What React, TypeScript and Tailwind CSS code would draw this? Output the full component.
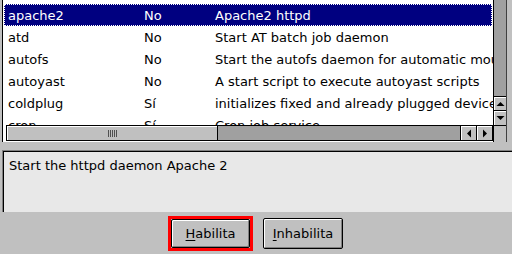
import React from "react";

const rows: [string, string, string][] = [
  ["apache2", "No", "Apache2 httpd"],
  ["atd", "No", "Start AT batch job daemon"],
  ["autofs", "No", "Start the autofs daemon for automatic mounting"],
  ["autoyast", "No", "A start script to execute autoyast scripts"],
  ["coldplug", "Sí", "initializes fixed and already plugged devices"],
  ["cron", "Sí", "Cron job service"],
];

function Tri({ dir }: { dir: "up" | "down" | "left" | "right" }) {
  const pts: Record<string, string> = {
    up: "0.5,5 4.5,1 8.5,5",
    down: "0.5,1 4.5,5 8.5,1",
    left: "5,0.5 1,4.5 5,8.5",
    right: "1,0.5 5,4.5 1,8.5",
  };
  const vert = dir === "up" || dir === "down";
  return (
    <svg width={vert ? 9 : 6} height={vert ? 6 : 9} viewBox={vert ? "0 0 9 6" : "0 0 6 9"}>
      <polygon points={pts[dir]} fill="#000" />
    </svg>
  );
}

export default function App() {
  return (
    <div
      className="w-[512px] h-[254px] bg-[#c0c0c0] flex flex-col overflow-hidden text-[13px] text-black leading-none"
      style={{ fontFamily: '"DejaVu Sans", sans-serif' }}
    >
      {/* list frame */}
      <div className="h-[142px] ml-[2px] w-[505px] shrink-0 flex border-l border-black border-r border-r-[#404040] bg-white">
        <div className="w-[490px] shrink-0 flex flex-col overflow-hidden">
          <div className="h-[125px] overflow-hidden pt-[4px] px-[1px]">
            {rows.map((r, i) => (
              <div
                key={r[0]}
                className={
                  "h-[22px] flex items-center border border-dotted pl-[3px] whitespace-nowrap " +
                  (i === 0 ? "bg-[#000080] text-white border-white" : "border-transparent")
                }
              >
                <div className="w-[136px] shrink-0">{r[0]}</div>
                <div className="w-[71px] shrink-0">{r[1]}</div>
                <div className="shrink-0">{r[2]}</div>
              </div>
            ))}
          </div>
          {/* horizontal scrollbar */}
          <div className="ml-[3px] w-[487px] h-[16px] shrink-0 flex bg-[#a0a0a0] border border-black">
            <div className="w-[211px] h-full bg-[#c0c0c0] border-r border-black shadow-[inset_1px_1px_0_#fff] flex items-center justify-center">
              <div className="flex gap-[1px] h-[7px]">
                <div className="w-[1px] bg-[#505050]" />
                <div className="w-[1px] bg-[#505050]" />
                <div className="w-[1px] bg-[#505050]" />
                <div className="w-[1px] bg-[#505050]" />
                <div className="w-[1px] bg-[#505050]" />
              </div>
            </div>
            <div className="flex-1" />
            <div className="w-[16px] h-full bg-[#c0c0c0] border-l border-black shadow-[inset_1px_1px_0_#fff] flex items-center justify-center">
              <Tri dir="left" />
            </div>
            <div className="w-[16px] h-full bg-[#c0c0c0] border-l border-black shadow-[inset_1px_1px_0_#fff] flex items-center justify-center">
              <Tri dir="right" />
            </div>
          </div>
          <div className="flex-1" />
        </div>
        {/* vertical scrollbar */}
        <div className="w-[13px] shrink-0 flex flex-col border-l border-black">
          <div className="h-[96px] bg-[#a0a0a0]" />
          <div className="h-[15px] bg-[#c0c0c0] border-y border-black shadow-[inset_1px_1px_0_#fff] flex items-center justify-center">
            <Tri dir="up" />
          </div>
          <div className="h-[15px] bg-[#c0c0c0] border-b border-black shadow-[inset_1px_1px_0_#fff] flex items-center justify-center">
            <Tri dir="down" />
          </div>
          <div className="flex-1 bg-[#c0c0c0]" />
        </div>
      </div>

      {/* description */}
      <div className="mt-[8px] ml-[2px] h-[62px] shrink-0 border-t border-l border-[#808080]">
        <div className="h-full border-t border-l border-black bg-[#e8e8e8] pl-[5px] pt-[7px]">
          Start the httpd daemon Apache 2
        </div>
      </div>

      {/* buttons */}
      <div className="flex items-start pt-[4px]">
        <div className="ml-[168px] w-[85px] h-[35px] border-[3px] border-[#ff0000]">
          <div className="w-full h-full border border-black rounded-[2px] bg-[#c0c0c0] shadow-[inset_1px_1px_0_#fff,inset_-1px_-1px_0_#808080] flex items-center justify-center">
            <span>
              <span className="underline underline-offset-2">H</span>abilita
            </span>
          </div>
        </div>
        <div className="ml-[10px] mt-[2px] w-[80px] h-[31px] border border-black rounded-[2px] bg-[#c0c0c0] shadow-[inset_1px_1px_0_#fff,inset_-1px_-1px_0_#808080] flex items-center justify-center">
          <span>
            <span className="underline underline-offset-2">I</span>nhabilita
          </span>
        </div>
      </div>
    </div>
  );
}
